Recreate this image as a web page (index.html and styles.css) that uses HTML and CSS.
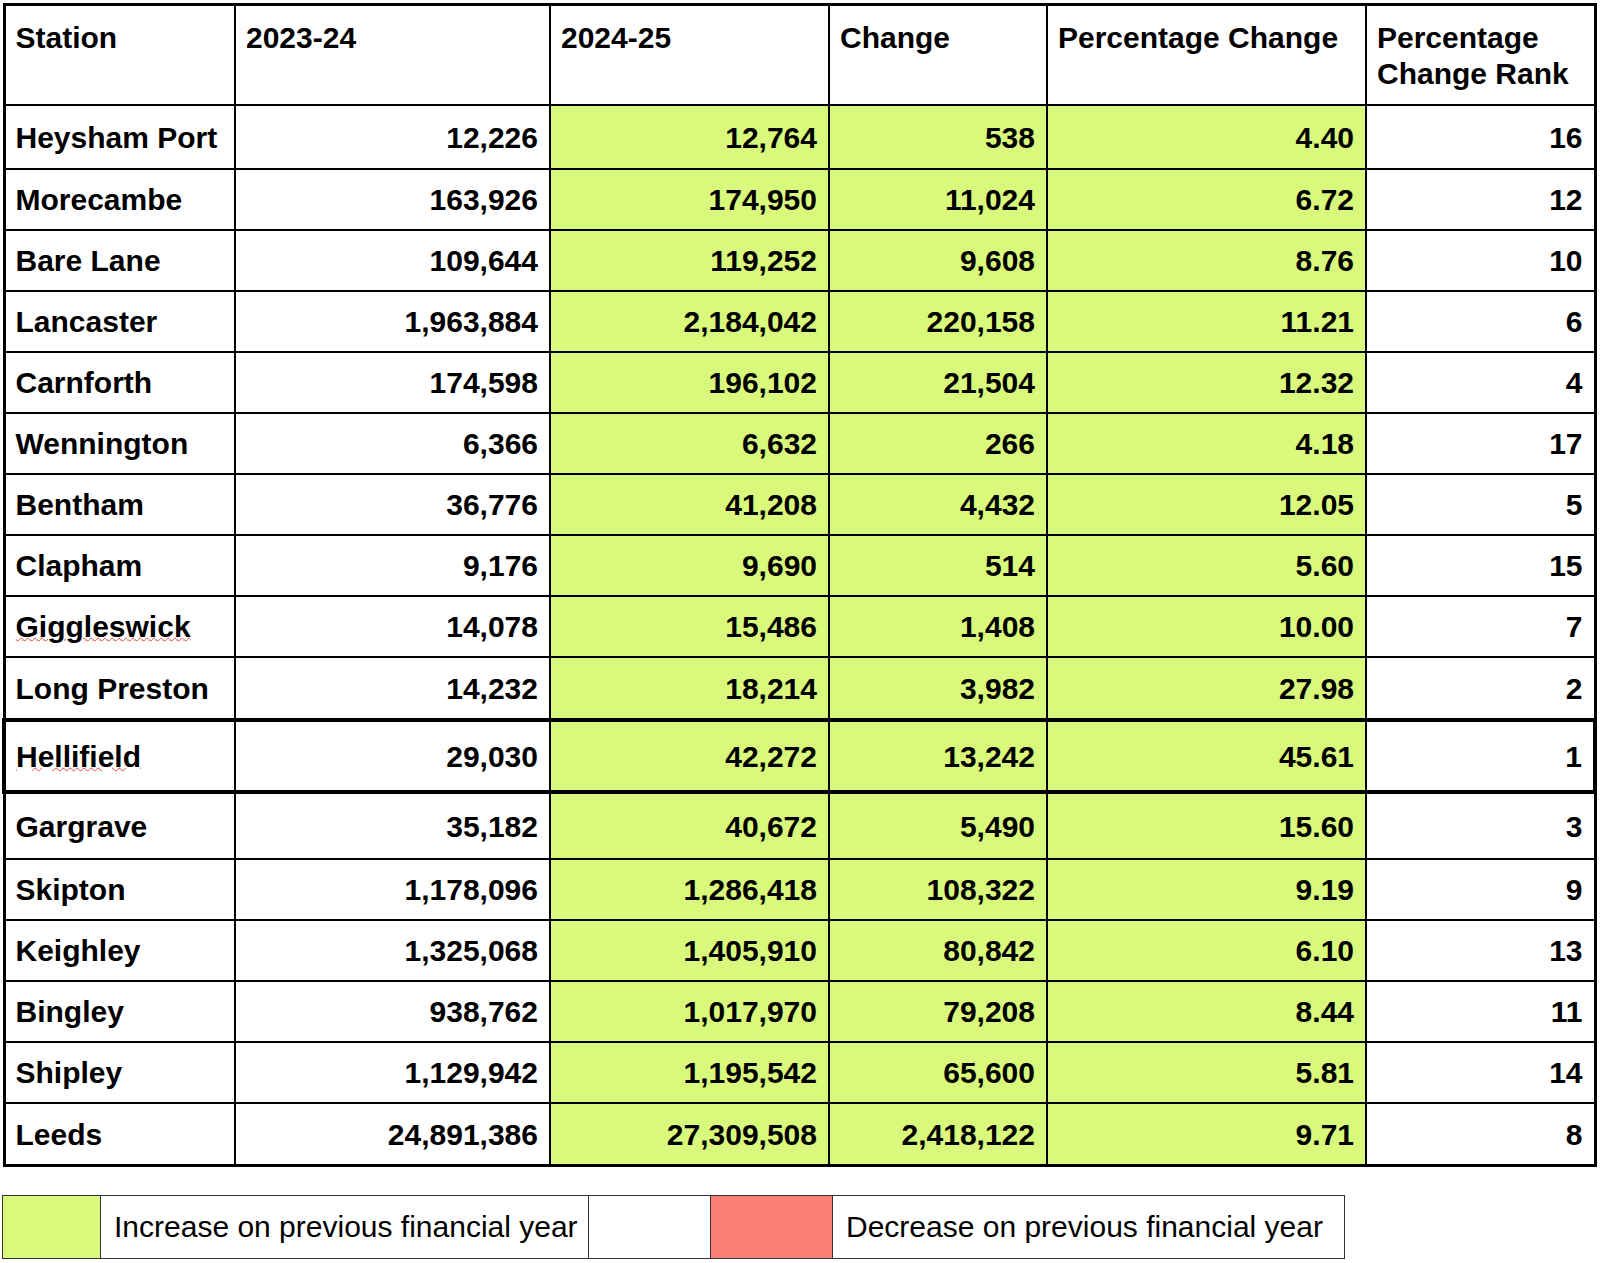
FILE: index.html
```html
<!DOCTYPE html>
<html lang="en">
<head>
<meta charset="utf-8">
<title>Station usage</title>
<link rel="stylesheet" href="styles.css">
</head>
<body>
<table class="data">
  <colgroup>
    <col class="c-station">
    <col class="c-prev">
    <col class="c-curr">
    <col class="c-change">
    <col class="c-pct">
    <col class="c-rank">
  </colgroup>
  <thead>
    <tr class="head">
      <th>Station</th>
      <th>2023-24</th>
      <th>2024-25</th>
      <th>Change</th>
      <th>Percentage Change</th>
      <th>Percentage Change Rank</th>
    </tr>
  </thead>
  <tbody>
    <tr class="r-first"><td>Heysham Port</td><td class="num">12,226</td><td class="num up">12,764</td><td class="num up">538</td><td class="num up">4.40</td><td class="num">16</td></tr>
    <tr><td>Morecambe</td><td class="num">163,926</td><td class="num up">174,950</td><td class="num up">11,024</td><td class="num up">6.72</td><td class="num">12</td></tr>
    <tr><td>Bare Lane</td><td class="num">109,644</td><td class="num up">119,252</td><td class="num up">9,608</td><td class="num up">8.76</td><td class="num">10</td></tr>
    <tr><td>Lancaster</td><td class="num">1,963,884</td><td class="num up">2,184,042</td><td class="num up">220,158</td><td class="num up">11.21</td><td class="num">6</td></tr>
    <tr><td>Carnforth</td><td class="num">174,598</td><td class="num up">196,102</td><td class="num up">21,504</td><td class="num up">12.32</td><td class="num">4</td></tr>
    <tr><td>Wennington</td><td class="num">6,366</td><td class="num up">6,632</td><td class="num up">266</td><td class="num up">4.18</td><td class="num">17</td></tr>
    <tr><td>Bentham</td><td class="num">36,776</td><td class="num up">41,208</td><td class="num up">4,432</td><td class="num up">12.05</td><td class="num">5</td></tr>
    <tr><td>Clapham</td><td class="num">9,176</td><td class="num up">9,690</td><td class="num up">514</td><td class="num up">5.60</td><td class="num">15</td></tr>
    <tr><td><span class="spell">Giggleswick</span></td><td class="num">14,078</td><td class="num up">15,486</td><td class="num up">1,408</td><td class="num up">10.00</td><td class="num">7</td></tr>
    <tr class="r-before"><td>Long Preston</td><td class="num">14,232</td><td class="num up">18,214</td><td class="num up">3,982</td><td class="num up">27.98</td><td class="num">2</td></tr>
    <tr class="r-top"><td><span class="spell">Hellifield</span></td><td class="num">29,030</td><td class="num up">42,272</td><td class="num up">13,242</td><td class="num up">45.61</td><td class="num">1</td></tr>
    <tr class="r-after"><td>Gargrave</td><td class="num">35,182</td><td class="num up">40,672</td><td class="num up">5,490</td><td class="num up">15.60</td><td class="num">3</td></tr>
    <tr><td>Skipton</td><td class="num">1,178,096</td><td class="num up">1,286,418</td><td class="num up">108,322</td><td class="num up">9.19</td><td class="num">9</td></tr>
    <tr><td>Keighley</td><td class="num">1,325,068</td><td class="num up">1,405,910</td><td class="num up">80,842</td><td class="num up">6.10</td><td class="num">13</td></tr>
    <tr><td>Bingley</td><td class="num">938,762</td><td class="num up">1,017,970</td><td class="num up">79,208</td><td class="num up">8.44</td><td class="num">11</td></tr>
    <tr><td>Shipley</td><td class="num">1,129,942</td><td class="num up">1,195,542</td><td class="num up">65,600</td><td class="num up">5.81</td><td class="num">14</td></tr>
    <tr class="r-last"><td>Leeds</td><td class="num">24,891,386</td><td class="num up">27,309,508</td><td class="num up">2,418,122</td><td class="num up">9.71</td><td class="num">8</td></tr>
  </tbody>
</table>

<table class="legend">
  <colgroup>
    <col class="l-swatch">
    <col class="l-text1">
    <col class="l-gap">
    <col class="l-swatch2">
    <col class="l-text2">
  </colgroup>
  <tr>
    <td class="sw-up"></td>
    <td class="l-label">Increase on previous financial year</td>
    <td></td>
    <td class="sw-down"></td>
    <td class="l-label">Decrease on previous financial year</td>
  </tr>
</table>
</body>
</html>
```

FILE: styles.css
```css
html, body {
  margin: 0;
  padding: 0;
  background: #ffffff;
}

body {
  font-family: "Liberation Sans", Arial, Helvetica, sans-serif;
  color: #000;
  padding: 3px 0 0 2px;
}

.data {
  border-collapse: collapse;
  table-layout: fixed;
  width: 1591px;
  border: 3px solid #000;
  font-size: 30px;
  font-weight: bold;
}

.c-station { width: 231px; }
.c-prev { width: 315px; }
.c-curr { width: 279px; }
.c-change { width: 218px; }
.c-pct { width: 319px; }
.c-rank { width: 229px; }

.data th,
.data td {
  border: 2px solid #000;
  padding: 0 11px 0 10px;
  line-height: 36px;
  white-space: nowrap;
}

.data th {
  text-align: left;
  vertical-align: top;
  padding-top: 14px;
  white-space: normal;
  font-weight: bold;
}

.head { height: 100px; }

.data td {
  height: 57px;
  vertical-align: middle;
  padding-top: 2px;
}

.data tr.r-first td { height: 60px; }
.data tr.r-before td { height: 58px; }
.data tr.r-last td { height: 58px; }

.data td.num { text-align: right; }

.data td.up { background: #d8f97b; }

.data tr.r-top td {
  height: 66px;
  border-top: 4px solid #000;
  border-bottom: 4px solid #000;
}

.data tr.r-top td:first-child { border-left: 4px solid #000; }
.data tr.r-top td:last-child { border-right: 4px solid #000; }

.data tr.r-after td { height: 62px; }

.spell {
  text-decoration: underline wavy #e0453a;
  text-decoration-thickness: 1px;
  text-underline-offset: 0;
}

.legend {
  border-collapse: collapse;
  table-layout: fixed;
  width: 1342px;
  margin: 28px 0 0 0;
  font-size: 30px;
}

.l-swatch { width: 98px; }
.l-text1 { width: 488px; }
.l-gap { width: 122px; }
.l-swatch2 { width: 122px; }
.l-text2 { width: 512px; }

.legend td {
  border: 1px solid #333;
  height: 62px;
  padding: 0 0 0 13px;
  vertical-align: middle;
  white-space: nowrap;
}

.legend .sw-up { background: #d8f97b; }
.legend .sw-down { background: #fe7f78; }
```
